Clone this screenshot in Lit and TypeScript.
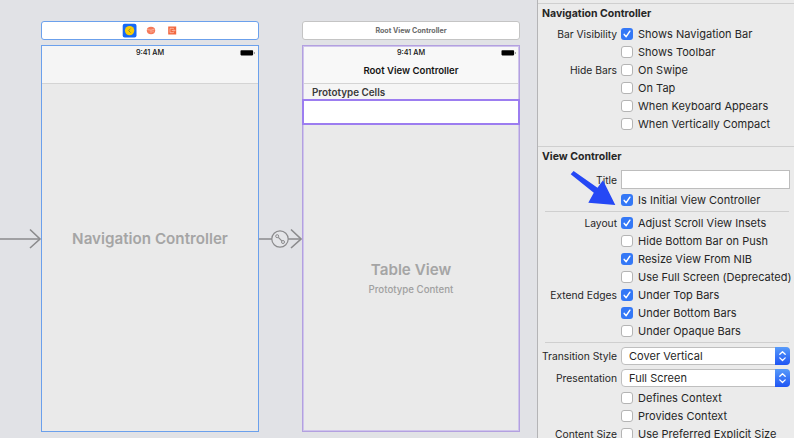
import { LitElement, html, css, svg, nothing } from "lit";
import { customElement, property } from "lit/decorators.js";

@customElement("check-row")
class CheckRow extends LitElement {
  @property() label = "";
  @property() text = "";
  @property({ type: Boolean }) checked = false;

  static styles = css`
    :host { display: grid; grid-template-columns: 79px 12px 1fr; align-items: center; height: 18px; flex: none; white-space: nowrap; }
    .label { text-align: right; padding-right: 4px; font-size: 10.3px; letter-spacing: -0.01px; }
    .box { box-sizing: border-box; width: 12px; height: 12px; border: 1px solid #b4b4b4; border-radius: 3px; background: #fff; }
    .on { border: none; background: #3478f6; }
    .box svg { display: block; }
    .text { padding-left: 5px; font-size: 11px; letter-spacing: 0.02px; }
  `;

  render() {
    return html`
      <span class="label">${this.label}</span>
      <span class="box ${this.checked ? "on" : ""}">${this.checked
        ? html`<svg width="12" height="12" viewBox="0 0 12 12"><path d="M3.2 6.4 5.2 8.7 8.9 3.2" fill="none" stroke="#fff" stroke-width="1.5" stroke-linecap="round" stroke-linejoin="round"/></svg>`
        : nothing}</span>
      <span class="text">${this.text}</span>`;
  }
}

@customElement("popup-row")
class PopupRow extends LitElement {
  @property() label = "";
  @property() value = "";

  static styles = css`
    :host { display: grid; grid-template-columns: 79px 169px; align-items: center; height: 22px; flex: none; white-space: nowrap; }
    .label { text-align: right; padding-right: 4px; font-size: 10.3px; letter-spacing: -0.01px; }
    .popup { box-sizing: border-box; height: 18px; border: 1px solid #bfbfbf; border-radius: 4px; background: #fff; display: flex; justify-content: space-between; align-items: center; padding-left: 7px; font-size: 11px; letter-spacing: 0.02px; }
    .step { width: 15px; height: 18px; margin-right: -1px; border-radius: 0 4px 4px 0; background: linear-gradient(#579bfa, #1f55f4); }
    .step svg { display: block; }
  `;

  render() {
    return html`
      <span class="label">${this.label}</span>
      <span class="popup"><span>${this.value}</span><span class="step">
        <svg width="15" height="18" viewBox="0 0 15 18"><path d="M4.8 7.3 7.5 4.7 10.2 7.3M4.8 10.9 7.5 13.5 10.2 10.9" fill="none" stroke="#fff" stroke-width="1.3" stroke-linecap="round" stroke-linejoin="round"/></svg>
      </span></span>`;
  }
}

@customElement("status-bar")
class StatusBar extends LitElement {
  static styles = css`
    :host { display: grid; grid-template-columns: 1fr auto 1fr; align-items: center; height: 13px; font-size: 7.3px; font-weight: 500; color: #111; }
    svg { justify-self: end; margin-right: 2px; }
  `;
  render() {
    return html`<span></span><span>9:41 AM</span>
      <svg width="16" height="6" viewBox="0 0 16 6"><rect x=".5" y=".2" width="12.6" height="5.2" rx=".8" fill="#000"/><path d="M14.4 2v2" stroke="#999"/></svg>`;
  }
}

const check = (text: string, checked = false, label = "") =>
  html`<check-row .label=${label} .text=${text} .checked=${checked}></check-row>`;

const arrowHead = (tip: number) =>
  svg`<path d=${`M${tip - 10} 229.5 L${tip} 239 L${tip - 10} 248`} fill="none" stroke="#8b8b8d" stroke-width="1.6"/>`;

@customElement("app-root")
class AppRoot extends LitElement {
  static styles = css`
    :host { display: flex; width: 794px; height: 438px; overflow: hidden; background: #e1e2e6; color: #262626; font-family: Inter, "Liberation Sans", sans-serif; }
    .canvas { position: relative; flex: 1; }
    .scene { position: absolute; top: 21px; width: 218px; display: flex; flex-direction: column; gap: 5px; white-space: nowrap; }
    .nav { left: 41px; }
    .root { left: 302px; }
    .dock { box-sizing: border-box; height: 19px; border: 1px solid #6ba0ec; border-radius: 3px; background: #fff; display: flex; align-items: center; justify-content: center; font-size: 7.1px; font-weight: 700; color: #6a6a6a; }
    .root .dock { border-color: #c4c4c4; }
    .dock svg { display: block; }
    .phone { box-sizing: border-box; height: 387px; border: 1px solid #6ba0ec; background: #eaeaea; display: flex; flex-direction: column; }
    .root .phone { border: 1px solid #b3a0e0; box-shadow: inset 0 0 0 1px #cfc4ec; }
    .bar { height: 37px; border-bottom: 1px solid #d4d4d4; background: #f5f5f5; }
    .root .bar { background: #f8f8f8; margin: 1px 1px 0; height: 36px; }
    .root status-bar { margin: -1px -1px 0; }
    .title { text-align: center; font-size: 9.6px; font-weight: 600; line-height: 23px; color: #151515; }
    .cells { margin: 0 1px; height: 15px; background: #f5f5f5; padding-left: 8px; line-height: 16px; font-size: 9.9px; font-weight: 600; color: #3a3a3a; }
    .cell { height: 22px; margin: 0 -1px; border: 2px solid #9c7df0; background: #fff; }
    .name { text-align: center; font-weight: 600; color: #a5a5a5; font-size: 15.2px; line-height: 20px; }
    .nav .name { margin-top: 145px; }
    .root .name { margin-top: 135px; }
    .sub { text-align: center; font-size: 9.7px; line-height: 20px; font-weight: 500; color: #a0a0a0; }
    .links { position: absolute; left: 0; top: 0; }
    .inspector { position: relative; box-sizing: border-box; width: 257px; border-left: 1px solid #b4b4b6; background: #ebebeb; display: flex; flex-direction: column; padding: 3px 0 0 4px; overflow: hidden; }
    .rule { flex: none; height: 1px; margin-left: -4px; background: #cfcfcf; }
    .inner { margin: 2px 5px 2px 3px; }
    .head { flex: none; height: 21px; line-height: 20px; font-size: 10.5px; font-weight: 700; white-space: nowrap; }
    .end { flex: none; height: 13px; }
    .field { flex: none; height: 23px; display: grid; grid-template-columns: 79px 169px; align-items: center; }
    .field span { text-align: right; padding-right: 4px; font-size: 10.3px; letter-spacing: -0.01px; }
    .input { box-sizing: border-box; height: 19px; border: 1px solid #bdbdbd; background: #fff; }
    .pointer { position: absolute; left: 32px; top: 170px; }
  `;

  render() {
    return html`
      <main class="canvas">
        <section class="scene nav">
          <div class="dock">
            <svg width="60" height="15" viewBox="0 0 60 15">
              <rect x="2.7" y=".7" width="13.8" height="13.8" rx="2" fill="#1769f5"/>
              <circle cx="9.6" cy="7.6" r="4.7" fill="#f8cc05"/>
              <path d="M10.6 5.6 8.6 7.6l2 2" fill="none" stroke="#8a8a45" stroke-width="1"/>
              <ellipse cx="31" cy="7.5" rx="4.2" ry="3.7" fill="#f57a5a"/>
              <path d="M27.2 6.6l3.8.5 3.6-1M31 7.3v2.6M33 7.6v1.6" fill="none" stroke="#ffc4b3" stroke-width=".7"/>
              <rect x="48.2" y="3.5" width="8" height="8" fill="#f26840"/>
              <path d="M53.4 6V5.3h-3.4v4.4h3.4V9M51.7 7.5h3M53.9 6.5l1 1-1 1" fill="none" stroke="#ffd0c0" stroke-width=".7"/>
            </svg>
          </div>
          <div class="phone">
            <div class="bar"><status-bar></status-bar></div>
            <div class="name">Navigation Controller</div>
          </div>
        </section>
        <section class="scene root">
          <div class="dock">Root View Controller</div>
          <div class="phone">
            <div class="bar"><status-bar></status-bar><div class="title">Root View Controller</div></div>
            <div class="cells">Prototype Cells</div>
            <div class="cell"></div>
            <div class="name">Table View</div>
            <div class="sub">Prototype Content</div>
          </div>
        </section>
        <svg class="links" width="302" height="260" viewBox="0 0 302 260">
          <path d="M0 239H40M259 239H272M288 239H301" stroke="#8b8b8d" stroke-width="1.6"/>
          ${arrowHead(40)}${arrowHead(301)}
          <circle cx="280" cy="239" r="8.2" fill="#e4e5e8" stroke="#8b8b8d" stroke-width="1.2"/>
          <path d="M278.3 237.3l3.5 3.5" stroke="#8b8b8d" stroke-width="1.2"/>
          <circle cx="277.2" cy="236.2" r="1.5" fill="none" stroke="#8b8b8d"/>
          <circle cx="283" cy="242" r="1.5" fill="none" stroke="#8b8b8d"/>
        </svg>
      </main>
      <aside class="inspector">
        <div class="rule"></div>
        <div class="head">Navigation Controller</div>
        ${check("Shows Navigation Bar", true, "Bar Visibility")}
        ${check("Shows Toolbar")}
        ${check("On Swipe", false, "Hide Bars")}
        ${check("On Tap")}
        ${check("When Keyboard Appears")}
        ${check("When Vertically Compact")}
        <div class="end"></div>
        <div class="rule"></div>
        <div class="head">View Controller</div>
        <div class="field"><span>Title</span><div class="input"></div></div>
        ${check("Is Initial View Controller", true)}
        <div class="rule inner"></div>
        ${check("Adjust Scroll View Insets", true, "Layout")}
        ${check("Hide Bottom Bar on Push")}
        ${check("Resize View From NIB", true)}
        ${check("Use Full Screen (Deprecated)")}
        ${check("Under Top Bars", true, "Extend Edges")}
        ${check("Under Bottom Bars", true)}
        ${check("Under Opaque Bars")}
        <div class="rule inner"></div>
        <popup-row label="Transition Style" value="Cover Vertical"></popup-row>
        <popup-row label="Presentation" value="Full Screen"></popup-row>
        ${check("Defines Context")}
        ${check("Provides Context")}
        ${check("Use Preferred Explicit Size", false, "Content Size")}
        <svg class="pointer" width="48" height="38" viewBox="0 0 48 38"><path d="M.7 4.2 3.6 1 27.5 17.8 33 10.2 45.3 35 18.3 32.8 23.8 22.8z" fill="#2548f5"/></svg>
      </aside>`;
  }
}
